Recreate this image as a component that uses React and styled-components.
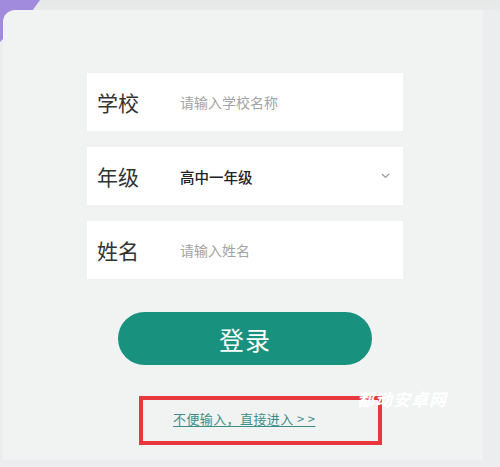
import React from 'react';
import styled, { createGlobalStyle } from 'styled-components';

const Global = createGlobalStyle`
  html, body {
    margin: 0;
    padding: 0;
    background: #ebecec;
  }
  body {
    font-family: "Noto Sans CJK SC", "Noto Sans", sans-serif;
  }
`

const Screen = styled.div`
  position: relative;
  width: 500px;
  height: 467px;
  box-sizing: border-box;
  padding: 10px 17px 7px 3px;
  background: linear-gradient(180deg, #e6e7e7 0px, #e9eaea 10px, #ecedee 10px);
  overflow: hidden;

  &::before {
    content: '';
    position: absolute;
    left: 0;
    top: 0;
    width: 40px;
    height: 42px;
    background: #a08bdc;
    clip-path: polygon(0 0, 100% 0, 82% 24%, 0 100%);
  }
`

const Card = styled.div`
  position: relative;
  z-index: 1;
  height: 100%;
  box-sizing: border-box;
  background: #f1f3f3;
  border-top-left-radius: 12px;
  padding: 63px 0 0 84px;
  display: flex;
  flex-direction: column;
`

const Form = styled.div`
  width: 316px;
  display: flex;
  flex-direction: column;
  gap: 16px;
`

const Row = styled.div`
  height: 58px;
  background: #fff;
  display: flex;
  align-items: center;
  padding: 0 13px 0 10px;
`

const Label = styled.span`
  width: 83px;
  flex-shrink: 0;
  font-size: 21px;
  color: #333;
`

const Field = styled.span`
  flex: 1;
  font-size: ${props => props.filled ? '14.5px' : '14px'};
  font-weight: ${props => props.filled ? 500 : 400};
  color: ${props => props.filled ? '#222' : '#a3a3a3'};
`

const Chevron = styled.svg`
  width: 9px;
  height: 6px;
`

const LoginButton = styled.button`
  margin: 33px 0 0 31px;
  width: 254px;
  height: 53px;
  border: none;
  border-radius: 27px;
  background: #18927f;
  color: #fff;
  font-family: inherit;
  font-size: 25px;
  letter-spacing: 1px;
  padding: 0;
`

const Highlight = styled.div`
  position: relative;
  margin: 31px 0 0 52px;
  width: 243px;
  height: 49px;
  box-sizing: border-box;
  border: 4px solid #e8383d;
  padding-left: 30px;
  display: flex;
  align-items: center;
`

const SkipLink = styled.a`
  font-size: 13px;
  color: #3c8f87;
  letter-spacing: 0.4px;
  text-decoration: underline;
  text-underline-offset: 2px;
  margin-top: -4px;
  white-space: nowrap;
`

const Watermark = styled.span`
  position: absolute;
  left: 214px;
  top: -14px;
  font-size: 17px;
  font-weight: 700;
  font-style: italic;
  color: #fff;
  white-space: nowrap;
  letter-spacing: 1px;
`

const fields = [
  { label: '学校', text: '请输入学校名称' },
  { label: '年级', text: '高中一年级', filled: true, select: true },
  { label: '姓名', text: '请输入姓名' },
]

export default function App() {
  return (
    <>
      <Global />
      <Screen>
        <Card>
          <Form>
            {fields.map(f => (
              <Row key={f.label}>
                <Label>{f.label}</Label>
                <Field filled={f.filled}>{f.text}</Field>
                {f.select && (
                  <Chevron viewBox="0 0 9 6">
                    <path d="M1 1l3.5 3.5L8 1" fill="none" stroke="#9a9a9a" strokeWidth="1.2" />
                  </Chevron>
                )}
              </Row>
            ))}
          </Form>
          <LoginButton>登录</LoginButton>
          <Highlight>
            <SkipLink>不便输入，直接进入 &gt; &gt;</SkipLink>
            <Watermark>都动安卓网</Watermark>
          </Highlight>
        </Card>
      </Screen>
    </>
  )
}
